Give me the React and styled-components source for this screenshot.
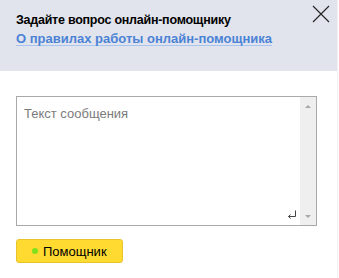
import React from "react"
import styled, { createGlobalStyle } from "styled-components"

const GlobalStyle = createGlobalStyle`
    html, body {
        margin: 0;
        padding: 0;
        background: #ffffff;
    }
    body {
        font-family: 'Liberation Sans', Arial, sans-serif;
    }
`
const Panel = styled.div`
    width: 338px;
    height: 278px;
    display: flex;
    flex-direction: column;
    border-right: 1px solid #f1f1f1;
    box-sizing: border-box;
`
const Header = styled.div`
    height: 71px;
    background: #e1e4ec;
    padding: 12px 16px 0 16px;
    box-sizing: border-box;
    position: relative;
`
const Title = styled.h2`
    margin: 0;
    font-size: 12.5px;
    letter-spacing: -0.25px;
    font-weight: bold;
    line-height: 16px;
    color: #000000;
`
const RulesLink = styled.a`
    display: inline-block;
    margin-top: 4px;
    font-size: 13px;
    font-weight: bold;
    line-height: 13px;
    color: #4b82d6;
    text-decoration: none;
    border-bottom: 1px solid #a9c4ee;
    cursor: pointer;
`
const CloseButton = styled.button`
    position: absolute;
    top: 5px;
    right: 7px;
    width: 18px;
    height: 18px;
    padding: 0;
    border: none;
    background: none;
    cursor: pointer;
`
const Body = styled.div`
    padding: 25px 20px 0 16px;
    display: flex;
    flex-direction: column;
    gap: 13px;
`
const MessageBox = styled.div`
    height: 130px;
    border: 1px solid #a9a9a9;
    box-sizing: border-box;
    display: flex;
    background: #ffffff;
`
const InputArea = styled.div`
    flex-grow: 1;
    display: flex;
    position: relative;
`
const MessageInput = styled.textarea`
    flex-grow: 1;
    border: none;
    outline: none;
    resize: none;
    padding: 9px 7px;
    font-family: 'Liberation Sans', Arial, sans-serif;
    font-size: 13px;
    line-height: 16px;
    color: #333333;

    &::placeholder {
        color: #7b7b7b;
    }
`
const EnterMark = styled.span`
    position: absolute;
    right: 3px;
    bottom: 5px;
    display: flex;
`
const Scrollbar = styled.div`
    width: 16px;
    background: #efefef;
    display: flex;
    flex-direction: column;
    justify-content: space-between;
    align-items: center;
    padding: 8px 0 7px 0;
`
const Arrow = styled.span`
    width: 0;
    height: 0;
    border-left: 3px solid transparent;
    border-right: 3px solid transparent;
    ${props => props.$down
        ? "border-top: 3px solid #a8a8a8;"
        : "border-bottom: 3px solid #a8a8a8;"}
`
const HelperButton = styled.button`
    align-self: flex-start;
    width: 107px;
    height: 24px;
    display: flex;
    align-items: center;
    gap: 5px;
    padding: 0 0 0 15px;
    background: #ffdb31;
    border: 1px solid #e8c42a;
    border-radius: 3px;
    font-family: 'Liberation Sans', Arial, sans-serif;
    font-size: 13px;
    color: #000000;
    cursor: pointer;
`
const StatusDot = styled.span`
    width: 6px;
    height: 6px;
    border-radius: 50%;
    background: ${props => props.$color};
`

const App = () => {

    return(
        <>
            <GlobalStyle/>
            <Panel>
                <Header>
                    <Title>Задайте вопрос онлайн-помощнику</Title>
                    <RulesLink>О правилах работы онлайн-помощника</RulesLink>
                    <CloseButton aria-label="Закрыть">
                        <svg width="18" height="18" viewBox="0 0 18 18">
                            <path d="M1 1 L17 17 M17 1 L1 17" stroke="#222" strokeWidth="1.1" fill="none"/>
                        </svg>
                    </CloseButton>
                </Header>
                <Body>
                    <MessageBox>
                        <InputArea>
                            <MessageInput placeholder="Текст сообщения"/>
                            <EnterMark>
                                <svg width="10" height="10" viewBox="0 0 10 10">
                                    <path d="M8.5 0.5 V6.5 H1.5 M3.5 4.5 L1.5 6.5 L3.5 8.5" stroke="#444" strokeWidth="1" fill="none"/>
                                </svg>
                            </EnterMark>
                        </InputArea>
                        <Scrollbar>
                            <Arrow/>
                            <Arrow $down/>
                        </Scrollbar>
                    </MessageBox>
                    <HelperButton>
                        <StatusDot $color="#7fe01c"/>
                        Помощник
                    </HelperButton>
                </Body>
            </Panel>
        </>
    )
}

export default App
